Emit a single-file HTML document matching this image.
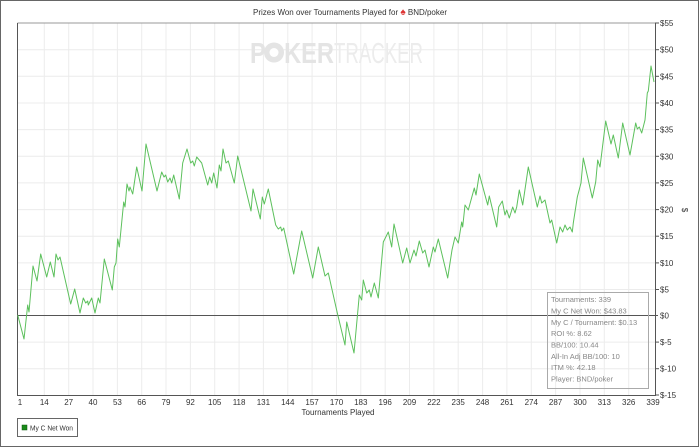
<!DOCTYPE html>
<html><head><meta charset="utf-8"><style>
html,body{margin:0;padding:0;background:#fff}
svg{display:block;font-family:"Liberation Sans",sans-serif}
</style></head><body>
<svg width="700" height="447" viewBox="0 0 700 447" xmlns="http://www.w3.org/2000/svg">
<rect x="0.5" y="0.5" width="698" height="446" fill="#fff" stroke="#666" stroke-width="1"/>
<text x="350" y="15" font-size="8" fill="#333" text-anchor="middle">Prizes Won over Tournaments Played for <tspan fill="#d33" font-size="10">♠</tspan> BND/poker</text>
<g stroke="#ececec" stroke-width="1">
<line x1="18" y1="49.7" x2="655" y2="49.7"/><line x1="18" y1="76.3" x2="655" y2="76.3"/><line x1="18" y1="103" x2="655" y2="103"/><line x1="18" y1="129.6" x2="655" y2="129.6"/><line x1="18" y1="156.3" x2="655" y2="156.3"/><line x1="18" y1="182.9" x2="655" y2="182.9"/><line x1="18" y1="209.6" x2="655" y2="209.6"/><line x1="18" y1="236.2" x2="655" y2="236.2"/><line x1="18" y1="262.9" x2="655" y2="262.9"/><line x1="18" y1="289.5" x2="655" y2="289.5"/><line x1="18" y1="342.1" x2="655" y2="342.1"/><line x1="18" y1="368.7" x2="655" y2="368.7"/>
<line x1="44.3" y1="23" x2="44.3" y2="395"/><line x1="68.7" y1="23" x2="68.7" y2="395"/><line x1="93" y1="23" x2="93" y2="395"/><line x1="117.4" y1="23" x2="117.4" y2="395"/><line x1="141.7" y1="23" x2="141.7" y2="395"/><line x1="166" y1="23" x2="166" y2="395"/><line x1="190.4" y1="23" x2="190.4" y2="395"/><line x1="214.7" y1="23" x2="214.7" y2="395"/><line x1="239.1" y1="23" x2="239.1" y2="395"/><line x1="263.4" y1="23" x2="263.4" y2="395"/><line x1="287.8" y1="23" x2="287.8" y2="395"/><line x1="312.1" y1="23" x2="312.1" y2="395"/><line x1="336.5" y1="23" x2="336.5" y2="395"/><line x1="360.8" y1="23" x2="360.8" y2="395"/><line x1="385.2" y1="23" x2="385.2" y2="395"/><line x1="409.5" y1="23" x2="409.5" y2="395"/><line x1="433.9" y1="23" x2="433.9" y2="395"/><line x1="458.2" y1="23" x2="458.2" y2="395"/><line x1="482.6" y1="23" x2="482.6" y2="395"/><line x1="506.9" y1="23" x2="506.9" y2="395"/><line x1="531.3" y1="23" x2="531.3" y2="395"/><line x1="555.6" y1="23" x2="555.6" y2="395"/><line x1="580" y1="23" x2="580" y2="395"/><line x1="604.3" y1="23" x2="604.3" y2="395"/><line x1="628.7" y1="23" x2="628.7" y2="395"/>
</g>
<text x="250" y="63" font-size="29" font-weight="bold" fill="#e4e4e4" textLength="84" lengthAdjust="spacingAndGlyphs">P<tspan fill="#fff">O</tspan>KER</text>
<circle cx="274" cy="52.5" r="10" fill="#e4e4e4"/>
<circle cx="274" cy="52.5" r="4.5" fill="#fff"/>
<text x="334" y="63" font-size="29" fill="#ececec" textLength="89" lengthAdjust="spacingAndGlyphs">TRACKER</text>
<line x1="17.5" y1="23" x2="655" y2="23" stroke="#999"/>
<line x1="17.5" y1="23" x2="17.5" y2="395.5" stroke="#555"/>
<line x1="17" y1="395.5" x2="655" y2="395.5" stroke="#555"/>
<line x1="655.5" y1="23" x2="655.5" y2="396" stroke="#555"/>
<line x1="18" y1="315.5" x2="658" y2="315.5" stroke="#555"/>
<g stroke="#555"><line x1="655" y1="23" x2="659" y2="23"/><line x1="655" y1="49.7" x2="659" y2="49.7"/><line x1="655" y1="76.3" x2="659" y2="76.3"/><line x1="655" y1="103" x2="659" y2="103"/><line x1="655" y1="129.6" x2="659" y2="129.6"/><line x1="655" y1="156.3" x2="659" y2="156.3"/><line x1="655" y1="182.9" x2="659" y2="182.9"/><line x1="655" y1="209.6" x2="659" y2="209.6"/><line x1="655" y1="236.2" x2="659" y2="236.2"/><line x1="655" y1="262.9" x2="659" y2="262.9"/><line x1="655" y1="289.5" x2="659" y2="289.5"/><line x1="655" y1="342.1" x2="659" y2="342.1"/><line x1="655" y1="368.7" x2="659" y2="368.7"/><line x1="655" y1="395" x2="659" y2="395"/></g>
<g font-size="8" fill="#333">
<text x="660" y="26">$55</text><text x="660" y="52.7">$50</text><text x="660" y="79.3">$45</text><text x="660" y="106">$40</text><text x="660" y="132.6">$35</text><text x="660" y="159.3">$30</text><text x="660" y="185.9">$25</text><text x="660" y="212.6">$20</text><text x="660" y="239.2">$15</text><text x="660" y="265.9">$10</text><text x="660" y="292.5">$5</text><text x="660" y="318.5">$0</text><text x="660" y="345.1">$-5</text><text x="660" y="371.7">$-10</text><text x="660" y="398">$-15</text>
</g>
<text x="0" y="0" font-size="8" fill="#333" transform="translate(682,210) rotate(90)" text-anchor="middle">$</text>
<g font-size="8" fill="#333" text-anchor="middle">
<text x="20" y="405">1</text><text x="44.3" y="405">14</text><text x="68.7" y="405">27</text><text x="93" y="405">40</text><text x="117.4" y="405">53</text><text x="141.7" y="405">66</text><text x="166" y="405">79</text><text x="190.4" y="405">92</text><text x="214.7" y="405">105</text><text x="239.1" y="405">118</text><text x="263.4" y="405">131</text><text x="287.8" y="405">144</text><text x="312.1" y="405">157</text><text x="336.5" y="405">170</text><text x="360.8" y="405">183</text><text x="385.2" y="405">196</text><text x="409.5" y="405">209</text><text x="433.9" y="405">222</text><text x="458.2" y="405">235</text><text x="482.6" y="405">248</text><text x="506.9" y="405">261</text><text x="531.3" y="405">274</text><text x="555.6" y="405">287</text><text x="580" y="405">300</text><text x="604.3" y="405">313</text><text x="628.7" y="405">326</text><text x="653" y="405">339</text>
<text x="338" y="415">Tournaments Played</text>
</g>
<polyline fill="none" stroke="#5cc05c" stroke-width="1" stroke-linejoin="round" points="17.7,315 24,339 27.7,305 29,312 33,266 37,281 40.7,254 46.7,277 50.3,262 54,277 56,254 58,260 60,257 70.7,304 74.7,289 80,313 83.3,298 85.7,303 87.7,301 88.3,305 91.7,298 95,313 98.3,298 100,303 104.3,259 112.3,290 114.3,267 116,263 117.7,239 119.3,247 123.7,202 125,207 127,184 129,191 130,187 132.7,194 136.7,167 142,191 146,144 157,191 161.7,172 164,177 165.7,175 167.7,182 170,178 171.7,183 173.7,175 179.3,199 182.7,163 187,149 190.7,163 192.7,161 194.3,166 196.7,157 201.7,163 207.7,185 209.7,177 211.7,183 213.7,173 217,188 219.3,165 221,171 223,149 226,163 228.3,161 234.3,183 237.7,156 251,211 253,189 260.3,219 262.3,197 264.3,204 268.3,189 275.7,225 278.3,229 280.7,227 281.7,231 283.7,228 293.7,274 301.7,231 312.7,278 318.3,247 325,276 328.3,273 337.3,313 345,345 346.7,322 354,353 359.3,295 361.7,300 363.3,280 366.7,293 369.3,290 371,297 374.3,283 378.3,298 383.3,242 388.3,232 391.7,247 394,224 402.7,263 406.7,248 410,263 414,250 416,256 419.3,241 422.7,253 425,250 429,267 433.3,247 435,252 438.3,239 447.7,278 452,250 455,237 458.3,243 461.7,222 462.7,227 465,205 468.3,210 474.3,188 476,195 479.3,174 487.7,205 489.3,196 496.7,227 498.7,207 502.3,201 505,215 506.7,210 509.3,218 512.7,207 515,213 516.7,207 519.3,190 522.7,205 528.3,167 537.3,207 540,196 541.7,203 545,200 550,223 551.7,220 556.7,243 560,227 562.7,232 565,225 567.3,230 570,227 572.3,232 573.3,223 577.3,197 581,183 583.3,158 592.3,198 595.7,182 597.7,160 600,167 605.7,121 611,144 613.3,135 618.3,158 622.7,123 630,155 635.7,123 637.3,129 639.3,127 641.7,133 645,120 647.3,93 648.3,91 651,66 654,82"/>
<rect x="547.5" y="292.5" width="101" height="96" fill="none" stroke="#aaa"/>
<g font-size="7.5" fill="#888">
<text x="551" y="302">Tournaments: 339</text>
<text x="551" y="313.5">My C Net Won: $43.83</text>
<text x="551" y="325">My C / Tournament: $0.13</text>
<text x="551" y="336">ROI %: 8.62</text>
<text x="551" y="347.5">BB/100: 10.44</text>
<text x="551" y="359">All-In Adj BB/100: 10</text>
<text x="551" y="370">ITM %: 42.18</text>
<text x="551" y="381.5">Player: BND/poker</text>
</g>
<rect x="17.5" y="418.5" width="60" height="18" fill="#fff" stroke="#666"/>
<rect x="22" y="425" width="5" height="5" fill="#1a8a1a" stroke="#0a5a0a" stroke-width="0.5"/>
<text x="30" y="430.5" font-size="7.5" fill="#333" textLength="43" lengthAdjust="spacingAndGlyphs">My C Net Won</text>
</svg>
</body></html>
